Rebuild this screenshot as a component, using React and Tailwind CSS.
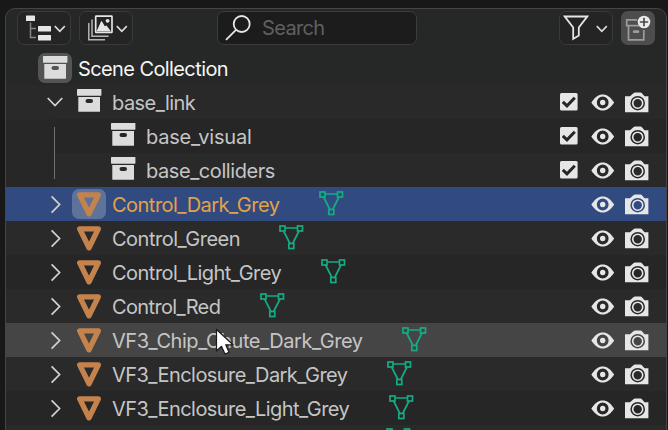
const collections = [
  { name: 'base_visual', tracking: -0.22 },
  { name: 'base_colliders', tracking: -0.43 },
];

const rows = [
  { name: 'Control_Dark_Grey', width: 207, tracking: -0.52, selected: true },
  { name: 'Control_Green', width: 167, tracking: -0.5 },
  { name: 'Control_Light_Grey', width: 209, tracking: -0.52 },
  { name: 'Control_Red', width: 148, tracking: -0.64 },
  { name: 'VF3_Chip_Chute_Dark_Grey', width: 290, tracking: -0.46, hovered: true },
  { name: 'VF3_Enclosure_Dark_Grey', width: 275, tracking: -0.56 },
  { name: 'VF3_Enclosure_Light_Grey', width: 277, tracking: -0.56 },
];

function CollectionIcon() {
  return (
    <svg width="25" height="23" viewBox="0 0 25 23" className="shrink-0" fill="#dcdcdc">
      <rect x="0" y="0" width="24.400" height="6.700" rx=".6" />
      <path fillRule="evenodd" d="M1.300 8H23V22.200Q23 22.700 22.500 22.700H1.800Q1.300 22.700 1.300 22.200ZM10.500 10A2 2 0 0 0 10.500 14H14A2 2 0 0 0 14 10Z" />
    </svg>
  );
}

function MeshObjectIcon() {
  return (
    <svg width="24" height="25" viewBox="0 0 24 25" className="shrink-0" fill="none">
      <path d="M2.700 2.900H21.300L12 21.800Z" stroke="#c4824d" strokeWidth="5.400" strokeLinejoin="round" />
    </svg>
  );
}

function MeshDataIcon({ className = '' }) {
  return (
    <svg width="25" height="25" viewBox="0 0 25 25" className={`shrink-0 ${className}`} fill="none" stroke="#16ab83" strokeWidth="1.700">
      <rect x="1" y="1" width="5" height="5" />
      <rect x="18.500" y="1" width="5" height="5" />
      <rect x="9.800" y="18.500" width="5" height="5" />
      <path d="M6 3H18.500M4.600 6L10.900 18.500M20 6L13.700 18.500" />
    </svg>
  );
}

function ChevronRight() {
  return (
    <svg width="10" height="19" viewBox="0 0 10 19" className="shrink-0" fill="none" stroke="#d2d2d2" strokeWidth="1.700">
      <path d="M.6 1.300L8.600 9.500L.6 17.700" />
    </svg>
  );
}

function SmallChevron() {
  return (
    <svg width="12" height="8" viewBox="0 0 12 8" fill="none" stroke="#d8d8d8" strokeWidth="1.700">
      <path d="M.8 1.200L5.800 6.300L10.800 1.200" />
    </svg>
  );
}

function CheckIcon() {
  return (
    <svg width="18" height="18" viewBox="0 0 18 18" fill="none">
      <rect width="17.600" height="17.600" rx="1.500" fill="#e6e6e6" />
      <path d="M2.800 8.800L7 12.800L14.800 4.800" stroke="#262626" strokeWidth="3" />
    </svg>
  );
}

function EyeIcon() {
  return (
    <svg width="24" height="17" viewBox="0 0 24 17" fill="#e6e6e6">
      <path
        fillRule="evenodd"
        d="M.3 8.500C4 3 7.500 .4 11.700 .4S19.500 3 23.200 8.500C19.500 14 16 16.600 11.700 16.600S4 14 .3 8.500ZM11.700 2.600A5.900 5.900 0 1 0 11.700 14.400A5.900 5.900 0 1 0 11.700 2.600Z"
      />
      <circle cx="11.700" cy="8.500" r="2.700" />
    </svg>
  );
}

function CameraIcon() {
  return (
    <svg width="24" height="21" viewBox="0 0 24 21" fill="#e6e6e6">
      <path
        fillRule="evenodd"
        d="M0 4.300H5L8.700 .9Q9.200 .4 10 .4H15.500Q16.200 .4 16.700 .9L19.500 4.300H23.400V20.300H0ZM12.700 3.900A7.300 7.300 0 1 0 12.700 18.500A7.300 7.300 0 1 0 12.700 3.900Z"
      />
      <circle cx="12.700" cy="11.200" r="5" fill="none" stroke="#e6e6e6" strokeWidth="1.600" />
    </svg>
  );
}

function Toggles({ checked = false }) {
  return (
    <div className="ml-auto flex items-center pr-[17px]">
      {checked && <div className="mr-[13px] mb-px"><CheckIcon /></div>}
      <EyeIcon />
      <div className="ml-2.5 flex"><CameraIcon /></div>
    </div>
  );
}

function Header() {
  return (
    <div className="flex h-[42px] shrink-0 items-start pt-0.5 pl-[11px]">
      <button className="flex h-[34px] w-[54px] items-center rounded-[7px] border border-[#3a3a3a] bg-[#232423] pl-2">
        <svg width="26" height="26" viewBox="0 0 26 26" fill="#e6e6e6">
          <rect x="0" y="0.500" width="9" height="5.500" rx=".6" />
          <rect x="12" y="11" width="13" height="5.500" rx=".6" />
          <rect x="12" y="20" width="13" height="5.500" rx=".6" />
          <path d="M4.500 7.500V22.500H10M4.500 13.500H10" fill="none" stroke="#858585" strokeWidth="1.500" />
        </svg>
        <span className="ml-[2px] mt-0.5"><SmallChevron /></span>
      </button>
      <button className="ml-2 flex h-[34px] w-[54px] items-center rounded-[7px] border border-[#3a3a3a] bg-[#232423] pl-2">
        <svg width="25" height="26" viewBox="0 0 25 26" fill="none">
          <path d="M.8 8V24.700H17M4 4.500V21.200H20.500" stroke="#b5b5b5" strokeWidth="1.500" />
          <rect x="7.700" y="1.200" width="16.300" height="16.300" rx=".6" stroke="#e6e6e6" strokeWidth="1.700" />
          <path d="M8.500 16.500L13 6.500Q13.500 5.700 14 6.500L16.800 11.300L18.500 10.500L23 16.500Z" fill="#e6e6e6" />
          <circle cx="19.600" cy="5.800" r="1.900" fill="#e6e6e6" />
        </svg>
        <span className="ml-[3px] mt-0.5"><SmallChevron /></span>
      </button>
      <div className="ml-[84px] flex h-[34px] w-[200px] items-center rounded-[7px] border border-[#3c3c3c] bg-[#1c1c1c] pl-[7px]">
        <svg width="26" height="26" viewBox="0 0 26 26" fill="none" stroke="#e6e6e6" strokeWidth="1.800">
          <circle cx="16.700" cy="9" r="8" />
          <path d="M11 14.800L1 24.800" />
        </svg>
        <span className="ml-[11px] text-[20px] tracking-[-0.65px] text-[#606060]">Search</span>
      </div>
      <button className="ml-[142px] flex h-[34px] w-[54px] items-center rounded-[7px] border border-[#3a3a3a] bg-[#232423] pl-[3px]">
        <svg width="26" height="26" viewBox="0 0 26 26" fill="none" stroke="#e6e6e6" strokeWidth="1.800">
          <path d="M1.800 1.500H24.200L15.800 12.500V20.500L10.200 24V12.500Z" />
        </svg>
        <span className="ml-[7px] mt-0.5"><SmallChevron /></span>
      </button>
      <button className="ml-2 h-[34px] w-[34px] rounded-[7px] bg-[#4d4d4d]">
        <svg width="34" height="34" viewBox="0 0 34 34" fill="none">
          <path d="M16 8.800H5.700V14.700H18M7.500 14.700V28.800H22.800V19" stroke="#9c9c9c" strokeWidth="1.700" />
          <path d="M13.200 20.700H17" stroke="#9c9c9c" strokeWidth="2.800" strokeLinecap="round" />
          <circle cx="23" cy="11" r="6.300" fill="#eaeaea" />
          <path d="M23 6.800V15.200M18.800 11H27.200" stroke="#484848" strokeWidth="1.700" />
        </svg>
      </button>
    </div>
  );
}

export default function App() {
  return (
    <div className="relative h-[430px] w-[668px] overflow-hidden bg-[#181818] pt-2 pl-[5px] font-['Inter','Liberation_Sans',sans-serif] text-[20px] leading-none text-[#c5c5c5]">
      <div className="flex h-[440px] w-[662px] flex-col overflow-hidden rounded-t-[10px] border border-[#444545] bg-[#262727]">
        <Header />

        <div className="flex h-[34px] shrink-0 items-center pl-8">
          <div className="flex h-[30px] w-[34px] items-center justify-center rounded-[7px] bg-[#545454] pb-px">
            <CollectionIcon />
          </div>
          <span className="ml-1.5 pt-0.5 tracking-[-0.6px] text-[#f5f5f5]">Scene Collection</span>
        </div>

        <div className="flex h-[34px] shrink-0 items-center bg-[#292929] pl-[41px]">
          <svg width="16" height="10" viewBox="0 0 16 10" fill="none" stroke="#d2d2d2" strokeWidth="1.700">
            <path d="M.7 1L8 8.500L15.300 1" />
          </svg>
          <div className="ml-3.5 pb-[3px]"><CollectionIcon /></div>
          <span className="ml-2.5 pt-0.5 tracking-[-0.56px]">base_link</span>
          <Toggles checked />
        </div>

        <div className="flex shrink-0">
          <div className="flex w-[49px] shrink-0 justify-end bg-[#272727] py-2">
            <div className="w-px bg-[#707070]" />
          </div>
          <div className="grow">
            {collections.map((item, i) => (
              <div key={item.name} className={`flex h-[34px] items-center pl-14 ${i ? 'bg-[#292929]' : 'bg-[#262626]'}`}>
                <div className="pb-[3px]"><CollectionIcon /></div>
                <span className="ml-2.5 pt-0.5" style={{ letterSpacing: `${item.tracking}px` }}>{item.name}</span>
                <Toggles checked />
              </div>
            ))}
          </div>
        </div>

        {rows.map((row, i) => (
          <div
            key={row.name}
            className={`flex h-[34px] shrink-0 items-center pl-[45px] ${
              row.selected ? 'bg-[#314b80]' : row.hovered ? 'bg-[#454545]' : i % 2 ? 'bg-[#2a2a2a]' : 'bg-[#262626]'
            }`}
          >
            <ChevronRight />
            <div className={`ml-[11px] flex h-[30px] w-[34px] items-center justify-center rounded-[7px] ${row.selected ? 'bg-[#5f7299]' : ''}`}>
              <MeshObjectIcon />
            </div>
            <span
              style={{ width: row.width, letterSpacing: `${row.tracking}px` }}
              className={`ml-1.5 pt-0.5 whitespace-nowrap ${row.selected ? 'text-[#e5a149]' : ''}`}
            >
              {row.name}
            </span>
            <MeshDataIcon className="mb-0.5" />
            <Toggles />
          </div>
        ))}

        <div className="flex h-[34px] shrink-0 items-start bg-[#2a2a2a] pt-[3px] pl-[380px]">
          <MeshDataIcon />
        </div>
      </div>

      <svg width="20" height="28" viewBox="0 0 20 28" className="absolute top-[328px] left-[215px]">
        <path d="M1.500 1.500V23L6.500 18.300L10 26L14 24.300L10.700 16.800H18Z" fill="#fff" stroke="#1b1b1b" strokeWidth="1.200" strokeLinejoin="round" />
      </svg>
    </div>
  );
}
